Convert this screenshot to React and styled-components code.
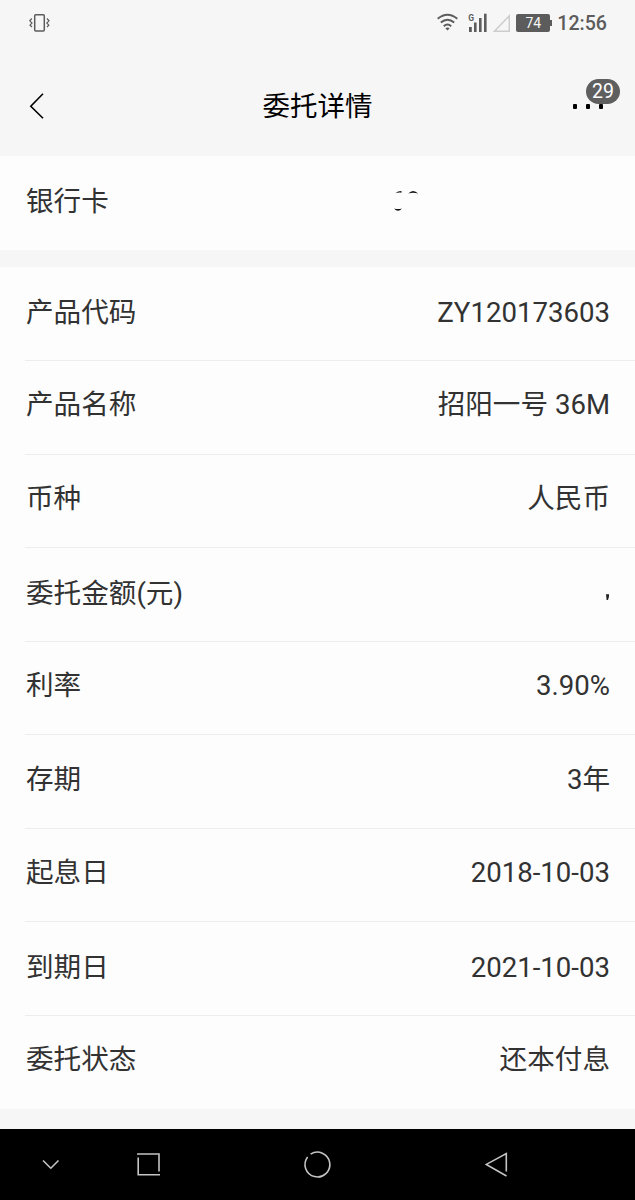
import styled, { createGlobalStyle } from "styled-components";

const GlobalStyle = createGlobalStyle`
  * {
    box-sizing: border-box;
  }

  body {
    margin: 0;
    background-color: #f6f6f6;
    font-family: Roboto, "Noto Sans CJK SC", sans-serif;
  }
`;

const Screen = styled.div`
  display: flex;
  flex-direction: column;
  width: 635px;
  height: 1200px;
  overflow: hidden;
  background-color: #f6f6f6;
`;

const StatusBar = styled.div`
  display: flex;
  align-items: center;
  justify-content: space-between;
  height: 46px;
  padding: 0 28px;
`;

const StatusIcons = styled.div`
  display: flex;
  align-items: center;
`;

const Battery = styled.div`
  display: flex;
  align-items: center;
  margin-left: 6px;
`;

const BatteryLevel = styled.div`
  width: 34px;
  height: 18px;
  border-radius: 2px;
  background-color: #5c5c5c;
  color: #f6f6f6;
  font-size: 14px;
  line-height: 19px;
  text-align: center;
`;

const BatteryTip = styled.div`
  width: 2px;
  height: 6px;
  background-color: #5c5c5c;
`;

const Clock = styled.div`
  margin-left: 5px;
  color: #5c5c5c;
  font-size: 19.6px;
  font-weight: 500;
  line-height: 46px;
  padding-top: 1px;
`;

const TitleBar = styled.div`
  display: grid;
  grid-template-columns: 100px 1fr 100px;
  align-items: center;
  height: 110px;
  padding: 10px 28px 0;
`;

const Title = styled.div`
  color: #000000;
  font-size: 27.5px;
  line-height: 40px;
  padding-top: 2px;
  text-align: center;
`;

const BackIcon = styled.svg`
  display: block;
`;

const More = styled.div`
  position: relative;
  display: flex;
  justify-content: flex-end;
  gap: 9px;
  padding-right: 4px;
`;

const Dot = styled.div`
  width: 4px;
  height: 5px;
  border-radius: 1px;
  background-color: #000000;
`;

const Badge = styled.div`
  position: absolute;
  right: -13px;
  top: -25px;
  width: 34px;
  height: 25px;
  border-radius: 13px;
  background-color: #5f5f5f;
  color: #ffffff;
  font-size: 19.5px;
  line-height: 25px;
  text-align: center;
`;

const Card = styled.div`
  margin-bottom: ${(props) => props.$gap || "0px"};
  padding-left: 25px;
  background-color: #fdfdfd;
`;

const Row = styled.div`
  display: flex;
  align-items: center;
  justify-content: space-between;
  height: ${(props) => props.$height}px;
  padding: 0 25px ${(props) => props.$bottom ?? 4}px 1px;
  border-bottom: ${(props) => (props.$last ? "none" : "1px solid #ededed")};
  color: #323232;
  font-size: 27.6px;
  line-height: 40px;
`;

const Label = styled.div`
  white-space: nowrap;
`;

const Value = styled.div`
  white-space: nowrap;
`;

const NavBar = styled.div`
  margin-top: auto;
  height: 71px;
  background-color: #000000;
`;

const NavIcons = styled.svg`
  display: block;
`;

const Remains = styled.svg`
  display: block;
`;

// remains of the masked card number
function MaskedCard() {
  return (
    <Remains width="218" height="30" viewBox="392 187 218 30" fill="none">
      <path d="M395.5 193.2 Q398 190.7 401.5 190.9 L401.5 192.7 Q399 192.1 395.5 193.2Z" fill="#222" />
      <path d="M408.3 193.6 Q413 188.2 418.2 193.6 Q413 191.8 408.3 193.6Z" fill="#111" />
      <path d="M394 208.4 Q398 209.4 402 208.4 Q398 213 394 208.4Z" fill="#111" />
    </Remains>
  );
}

// remains of the masked amount
function MaskedAmount() {
  return (
    <Remains width="6" height="30" viewBox="604 579 6 30">
      <path d="M606 594.3 H609 V596.5 L608 600 H606.6 Z" fill="#222" />
    </Remains>
  );
}

const details = [
  { label: "产品代码", value: "ZY120173603", height: 94, bottom: 2 },
  { label: "产品名称", value: "招阳一号 36M", height: 94, bottom: 5 },
  { label: "币种", value: "人民币", height: 93, bottom: 4 },
  { label: "委托金额(元)", value: <MaskedAmount />, height: 94, bottom: 2 },
  { label: "利率", value: "3.90%", height: 93, bottom: 4 },
  { label: "存期", value: "3年", height: 94, bottom: 3 },
  { label: "起息日", value: "2018-10-03", height: 93, bottom: 4 },
  { label: "到期日", value: "2021-10-03", height: 94, bottom: 2 },
  { label: "委托状态", value: "还本付息", height: 93, bottom: 5 },
];

function VibrateIcon() {
  return (
    <svg width="23" height="20" viewBox="28 13 23 20" fill="none" stroke="#5c5c5c">
      <rect x="34.7" y="14.7" width="9.6" height="16.4" rx="1" strokeWidth="1.5" />
      <path d="M31.8 18.5 L29.8 20.8 L32 23 L30 25.2 L32 27" strokeWidth="1.2" />
      <path d="M47 18.5 L49 20.8 L46.8 23 L48.8 25.2 L47 27" strokeWidth="1.2" />
    </svg>
  );
}

function SignalIcons() {
  return (
    <svg width="74" height="20" viewBox="436 13 74 20" fill="none">
      <g stroke="#5c5c5c" strokeWidth="2">
        <path d="M437.7 18.8 Q447.5 10.8 457.3 18.8" />
        <path d="M440.8 22.6 Q447.5 16.8 454.2 22.6" />
        <path d="M443.8 26.2 Q447.5 22.7 451.2 26.2" />
      </g>
      <path d="M445.3 28.3 Q447.5 26.7 449.7 28.3 L447.5 30.6Z" fill="#5c5c5c" />
      <text x="468.3" y="21" fontSize="8.5" fontWeight="700" fill="#5c5c5c">
        G
      </text>
      <g fill="#5c5c5c">
        <rect x="469" y="27" width="2.8" height="5" />
        <rect x="474" y="22.5" width="2.6" height="9.5" />
        <rect x="479" y="18" width="2.6" height="14" />
        <rect x="484" y="13.7" width="2.6" height="18.3" />
      </g>
      <path d="M494.5 31.3 L509.3 31.3 L509.3 15.8 Z" stroke="#cccccc" strokeWidth="1.5" />
    </svg>
  );
}

export default function App() {
  return (
    <>
      <GlobalStyle />
      <Screen>
        <StatusBar>
          <VibrateIcon />
          <StatusIcons>
            <SignalIcons />
            <Battery>
              <BatteryLevel>74</BatteryLevel>
              <BatteryTip />
            </Battery>
            <Clock>12:56</Clock>
          </StatusIcons>
        </StatusBar>
        <TitleBar>
          <BackIcon width="18" height="28" viewBox="28 92 18 28" fill="none">
            <path d="M43 93.8 L30.8 106.2 L43 118.2" stroke="#000000" strokeWidth="1.6" />
          </BackIcon>
          <Title>委托详情</Title>
          <More>
            <Dot />
            <Dot />
            <Dot />
            <Badge>29</Badge>
          </More>
        </TitleBar>
        <Card $gap="17px">
          <Row $height={94} $bottom={3} $last>
            <Label>银行卡</Label>
            <Value>
              <MaskedCard />
            </Value>
          </Row>
        </Card>
        <Card>
          {details.map((item, index) => (
            <Row
              key={item.label}
              $height={item.height}
              $bottom={item.bottom}
              $last={index === details.length - 1}
            >
              <Label>{item.label}</Label>
              <Value>{item.value}</Value>
            </Row>
          ))}
        </Card>
        <NavBar>
          <NavIcons
            width="635"
            height="71"
            viewBox="0 1129 635 71"
            fill="none"
            stroke="#c4c4c4"
            strokeWidth="1.6"
          >
            <path d="M43 1160.5 L50.8 1168.2 L58.5 1160.5" />
            <path d="M137 1154 H159 V1171.5" />
            <path d="M138.2 1157.5 V1174.8 H160" />
            <path d="M310.6 1154.2 A12.4 12.4 0 1 1 307.6 1157" />
            <path d="M506.3 1171.5 V1153.5 L486.3 1164.4 L506.5 1176" />
          </NavIcons>
        </NavBar>
      </Screen>
    </>
  );
}
